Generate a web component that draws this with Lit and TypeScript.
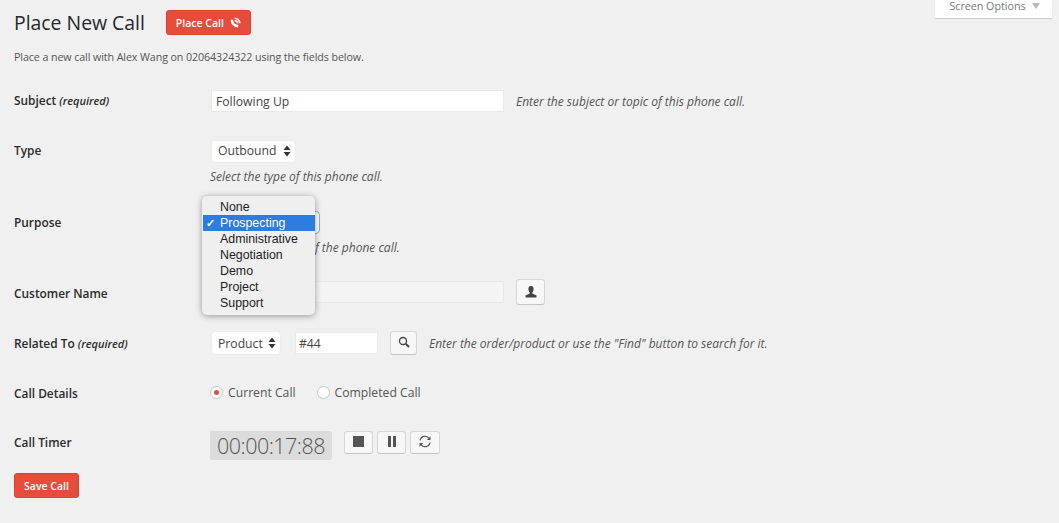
import { LitElement, html, css } from "lit";
import { customElement } from "lit/decorators.js";

const updown = html`<svg class="updown" viewBox="0 0 8 12" width="8" height="12"><path d="M4 0.5 7.5 5H0.5zM4 11.5 0.5 7H7.5z" fill="#333"/></svg>`;

@customElement("app-root")
export class AppRoot extends LitElement {
  static styles = css`
    :host { display: block; position: relative; width: 1059px; height: 523px; overflow: hidden; background: #f0f0f0; font-family: "Open Sans", sans-serif; color: #444; font-size: 12.2px; }
    .page { padding: 10px 0 0 14px; display: flex; flex-direction: column; }
    .head { display: flex; align-items: center; gap: 21px; height: 25px; }
    h1 { margin: 0; font-size: 19.4px; font-weight: 400; color: #23282d; line-height: 25px; }
    .btn-red { display: inline-flex; align-items: center; justify-content: center; gap: 6px; background: #e64c3c; border: 1px solid #d8452f; border-radius: 3px; color: #fff; font-size: 10.5px; font-weight: 600; box-sizing: border-box; }
    .place { width: 85px; height: 25px; }
    .save { width: 65px; height: 25px; margin-top: 13px; }
    .intro { margin: 13px 0 0; font-size: 10.7px; letter-spacing: -0.09px; line-height: 18px; color: #555; }
    .row { display: grid; grid-template-columns: 197px 1fr; align-items: center; margin-top: 26px; }
    .m24 { margin-top: 24px; }
    .m28 { margin-top: 28px; }
    .m23 { margin-top: 23px; }
    .label { font-weight: 600; font-size: 11.9px; color: #2b2b2b; }
    .label em { font-weight: 600; font-size: 11px; font-style: italic; }
    .up { padding-bottom: 2px; }
    .up2 { padding-bottom: 4px; }
    .down { padding-top: 2px; }
    .cell { display: flex; align-items: center; position: relative; }
    .hint { grid-column: 2; font-style: italic; font-size: 12px; line-height: 18px; color: #555; margin: 5px 0 -1px -1px; }
    .clipped { padding-left: 105px; }
    .inline-hint { font-style: italic; font-size: 12px; color: #555; margin-left: 12px; }
    .input { box-sizing: border-box; height: 22px; background: #fff; border: 1px solid #e9e9e9; display: flex; align-items: center; padding-left: 4px; color: #444; }
    .subject { width: 293px; }
    .customer { width: 293px; background: #f4f4f4; }
    .num { width: 83px; margin-left: 14px; padding-left: 3px; }
    .select { box-sizing: border-box; height: 23px; background: #fff; border: 1px solid #ececec; border-radius: 4px; display: flex; align-items: center; justify-content: space-between; padding: 0 4px 2px 6px; color: #444; }
    .tall { height: 24px; padding-bottom: 0; }
    .w85 { width: 85px; }
    .w70 { width: 70px; }
    .icon-btn { box-sizing: border-box; display: inline-flex; align-items: center; justify-content: center; background: #f7f7f7; border: 1px solid #d6d6d6; border-bottom-color: #c4c4c4; border-radius: 3px; }
    .user-btn { width: 29px; height: 26px; margin-left: 12px; }
    .find-btn { width: 27px; height: 24px; margin-left: 12px; padding-bottom: 3px; }
    .radios { margin-left: -1px; }
    .radio { display: flex; align-items: center; gap: 5px; color: #555; margin-right: 21px; }
    .dot { box-sizing: border-box; width: 13px; height: 13px; border-radius: 50%; background: #fff; border: 1px solid #c4c4c4; display: flex; align-items: center; justify-content: center; }
    .dot i { display: block; width: 5px; height: 5px; border-radius: 50%; background: #e74c3c; }
    .details { height: 23px; }
    .timer { box-sizing: border-box; width: 122px; height: 29px; background: #dcdcdc; border-radius: 2px; font-size: 21.5px; font-weight: 300; letter-spacing: -0.5px; color: #555; display: flex; align-items: center; justify-content: center; margin: 0 8px 0 -1px; }
    .timer-row { align-items: start; margin-top: 27px; }
    .timer-row .label { line-height: 23px; }
    .timer-row .cell { align-items: flex-start; gap: 4px; }
    .tbtn { height: 23px; width: 29px; padding-bottom: 2px; }
    .w30 { width: 30px; }
    .menu { position: absolute; left: -9px; top: -15px; width: 113px; height: 119px; box-sizing: border-box; padding-top: 3px; background: #efefef; border-radius: 5px; box-shadow: 0 1px 6px rgba(0,0,0,.38); font-family: "Liberation Sans", sans-serif; font-size: 12.4px; color: #222; z-index: 2; }
    .opt { height: 16px; line-height: 16px; padding-left: 18px; position: relative; }
    .opt.sel { background: #2a7de1; color: #fff; margin: 0 0 0 1px; padding-left: 17px; }
    .check { position: absolute; left: 3px; top: 0; font-size: 11px; font-weight: 700; }
    .purpose { width: 109px; border-color: #7fb0ea; }
    .tab { position: absolute; top: 0; left: 935px; width: 117px; height: 18px; box-sizing: border-box; background: #fff; box-shadow: 0 1px 1px rgba(0,0,0,.12); display: flex; align-items: center; justify-content: center; gap: 6px; font-size: 10.7px; color: #72777c; padding: 0 0 6px 2px; }
    .tri { width: 0; height: 0; border: 4px solid transparent; border-top: 6px solid #b4b9be; border-bottom: 0; }
  `;

  render() {
    const opts = ["None", "Prospecting", "Administrative", "Negotiation", "Demo", "Project", "Support"];
    return html`
      <div class="page">
        <div class="head">
          <h1>Place New Call</h1>
          <span class="btn-red place">Place Call
            <svg width="11" height="11" viewBox="0 0 13 13" fill="none" stroke="#fff"><path d="M2.2 3.2C2.4 7.4 5.4 10.4 9.6 10.8" stroke-width="3"/><path d="M5.5 1.5A6.2 6.2 0 0 1 11.6 7.4" stroke-width="2"/><path d="M5.6 4.2A3.4 3.4 0 0 1 8.9 7.5" stroke-width="2"/></svg>
          </span>
        </div>
        <p class="intro">Place a new call with Alex Wang on 02064324322 using the fields below.</p>

        <div class="row m24">
          <div class="label up">Subject <em>(required)</em></div>
          <div class="cell"><div class="input subject">Following Up</div><span class="inline-hint">Enter the subject or topic of this phone call.</span></div>
        </div>

        <div class="row m28">
          <div class="label up2">Type</div>
          <div class="cell"><div class="select w85">Outbound ${updown}</div></div>
          <div class="hint">Select the type of this phone call.</div>
        </div>

        <div class="row">
          <div class="label up">Purpose</div>
          <div class="cell">
            <div class="select purpose"></div>
            <div class="menu">
              ${opts.map((o) => html`<div class="opt ${o === "Prospecting" ? "sel" : ""}">${o === "Prospecting" ? html`<span class="check">✓</span>` : ""}${o}</div>`)}
            </div>
          </div>
          <div class="hint clipped">f the phone call.</div>
        </div>

        <div class="row m23">
          <div class="label down">Customer Name</div>
          <div class="cell"><div class="input customer"></div>
            <span class="icon-btn user-btn">
              <svg width="14" height="14" viewBox="0 0 14 14"><path d="M7 1C5.2 1 4.4 2.3 4.4 4 4.4 5.6 5 6.8 5.7 7.5V8.5L1.5 10.5V12.5H12.5V10.5L8.3 8.5V7.5C9 6.8 9.6 5.6 9.6 4 9.6 2.3 8.8 1 7 1Z" fill="#444"/></svg>
            </span>
          </div>
        </div>

        <div class="row">
          <div class="label">Related To <em>(required)</em></div>
          <div class="cell">
            <div class="select tall w70">Product ${updown}</div>
            <div class="input num">#44</div>
            <span class="icon-btn find-btn">
              <svg width="12" height="12" viewBox="0 0 12 12"><circle cx="5" cy="5" r="3.5" fill="none" stroke="#444" stroke-width="1.3"/><path d="M7.6 7.6 11 11" stroke="#444" stroke-width="2"/></svg>
            </span>
            <span class="inline-hint">Enter the order/product or use the "Find" button to search for it.</span>
          </div>
        </div>

        <div class="row details">
          <div class="label">Call Details</div>
          <div class="cell radios">
            <span class="radio"><span class="dot"><i></i></span>Current Call</span>
            <span class="radio"><span class="dot"></span>Completed Call</span>
          </div>
        </div>

        <div class="row timer-row">
          <div class="label">Call Timer</div>
          <div class="cell">
            <div class="timer">00:00:17:88</div>
            <span class="icon-btn tbtn"><svg width="11" height="11" viewBox="0 0 11 11"><rect width="11" height="11" fill="#555"/></svg></span>
            <span class="icon-btn tbtn"><svg width="8" height="11" viewBox="0 0 8 11"><rect width="3" height="11" fill="#555"/><rect x="5" width="3" height="11" fill="#555"/></svg></span>
            <span class="icon-btn tbtn w30"><svg width="14" height="13" viewBox="0 0 14 13"><path d="M2 5.4A5 5 0 0 1 11 3.4M12 7.6A5 5 0 0 1 3 9.6" fill="none" stroke="#555" stroke-width="1.1"/><path d="M12.5 1.2V5H8.8zM1.5 11.8V8H5.2z" fill="#555"/></svg></span>
          </div>
        </div>

        <span class="btn-red save">Save Call</span>
      </div>
      <div class="tab">Screen Options <span class="tri"></span></div>
    `;
  }
}
